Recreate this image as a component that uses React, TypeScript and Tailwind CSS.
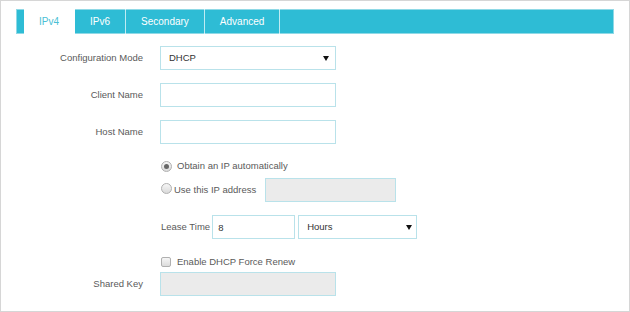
import { useState } from 'react'

// ── 탭 ───────────────────────────────────────
type Tab = 'IPv4' | 'IPv6' | 'Secondary' | 'Advanced'
const TABS: Tab[] = ['IPv4', 'IPv6', 'Secondary', 'Advanced']

const FONT = "font-['Liberation_Sans',Arial,sans-serif]"
const INPUT = 'h-6 w-[176px] border border-[#b9e2ea] bg-white px-2 text-[9.5px] text-[#333] outline-none'

function Label({ children }: { children: React.ReactNode }) {
  return <div className="w-[128px] shrink-0 pr-px text-right text-[9.5px] text-[#5a5a5a]">{children}</div>
}

function Arrow() {
  return (
    <svg width="6" height="5" viewBox="0 0 6 5" className="shrink-0">
      <path d="M0 0h6L3 5z" fill="#111" />
    </svg>
  )
}

function Radio({ checked }: { checked?: boolean }) {
  return (
    <span className="flex h-[11px] w-[11px] shrink-0 items-center justify-center rounded-full border border-[#b0b0b0] bg-gradient-to-b from-[#f6f6f6] to-[#dadada]">
      {checked && <span className="h-[5px] w-[5px] rounded-full bg-[#666]" />}
    </span>
  )
}

export default function App() {
  const [tab, setTab] = useState<Tab>('IPv4')
  const [auto, setAuto] = useState(true)

  return (
    <div className={`h-[312px] w-[630px] border border-[#d6d6d6] bg-white pt-2 ${FONT}`}>
      {/* 탭 바 */}
      <div className="mx-[15px] flex h-[25px] border border-[#8fd9e6] bg-[#2ebcd5] pl-[7px]">
        {TABS.map((t) => (
          <button
            key={t}
            type="button"
            onClick={() => setTab(t)}
            className={[
              '-mt-px flex h-[25px] items-center border-r border-white/70 px-[15px] text-[10px]',
              tab === t ? 'bg-white text-[#4cbfd5]' : 'text-white',
            ].join(' ')}
          >
            {t}
          </button>
        ))}
      </div>

      {/* 폼 */}
      <div className="ml-[15px] mt-3 flex flex-col text-[#5a5a5a]">
        <div className="flex items-center gap-4">
          <Label>Configuration Mode</Label>
          <div className="flex h-6 w-[176px] items-center justify-between border border-[#b9e2ea] pl-2 pr-[6px] text-[9.5px] text-[#333]">
            <span>DHCP</span>
            <Arrow />
          </div>
        </div>

        <div className="mt-[13px] flex items-center gap-4">
          <Label>Client Name</Label>
          <input className={INPUT} defaultValue="" />
        </div>

        <div className="mt-[13px] flex items-center gap-4">
          <Label>Host Name</Label>
          <input className={INPUT} defaultValue="" />
        </div>

        <div className="ml-[145px] mt-[14px] flex h-4 items-center text-[9.5px]" onClick={() => setAuto(true)}>
          <Radio checked={auto} />
          <span className="ml-[5px]">Obtain an IP automatically</span>
        </div>

        <div className="ml-[145px] mt-1 flex items-center text-[9.5px]" onClick={() => setAuto(false)}>
          <span className="-mt-[3px]"><Radio checked={!auto} /></span>
          <span className="ml-[2px]">Use this IP address</span>
          <div className="ml-[9px] h-6 w-[131px] border border-[#b9e2ea] bg-[#ebebeb]" />
        </div>

        <div className="ml-[145px] mt-[13px] flex items-center text-[9.5px]">
          <span>Lease Time</span>
          <input className="ml-[2px] h-6 w-[83px] border border-[#b9e2ea] px-[5px] text-[9.5px] text-[#333] outline-none" defaultValue="8" />
          <div className="ml-[3px] flex h-6 w-[119px] items-center justify-between border border-[#b9e2ea] pl-[8px] pr-[4px] text-[9.5px] text-[#333]">
            <span>Hours</span>
            <Arrow />
          </div>
        </div>

        <div className="ml-[145px] mt-[15px] flex h-4 items-center text-[9.5px]">
          <span className="h-[10px] w-[10px] shrink-0 rounded-[2px] border border-[#b0b0b0] bg-gradient-to-b from-[#f6f6f6] to-[#dcdcdc]" />
          <span className="ml-[6px]">Enable DHCP Force Renew</span>
        </div>

        <div className="mt-[2px] flex items-center gap-4">
          <Label>Shared Key</Label>
          <div className="h-6 w-[176px] border border-[#b9e2ea] bg-[#ebebeb]" />
        </div>
      </div>
    </div>
  )
}
